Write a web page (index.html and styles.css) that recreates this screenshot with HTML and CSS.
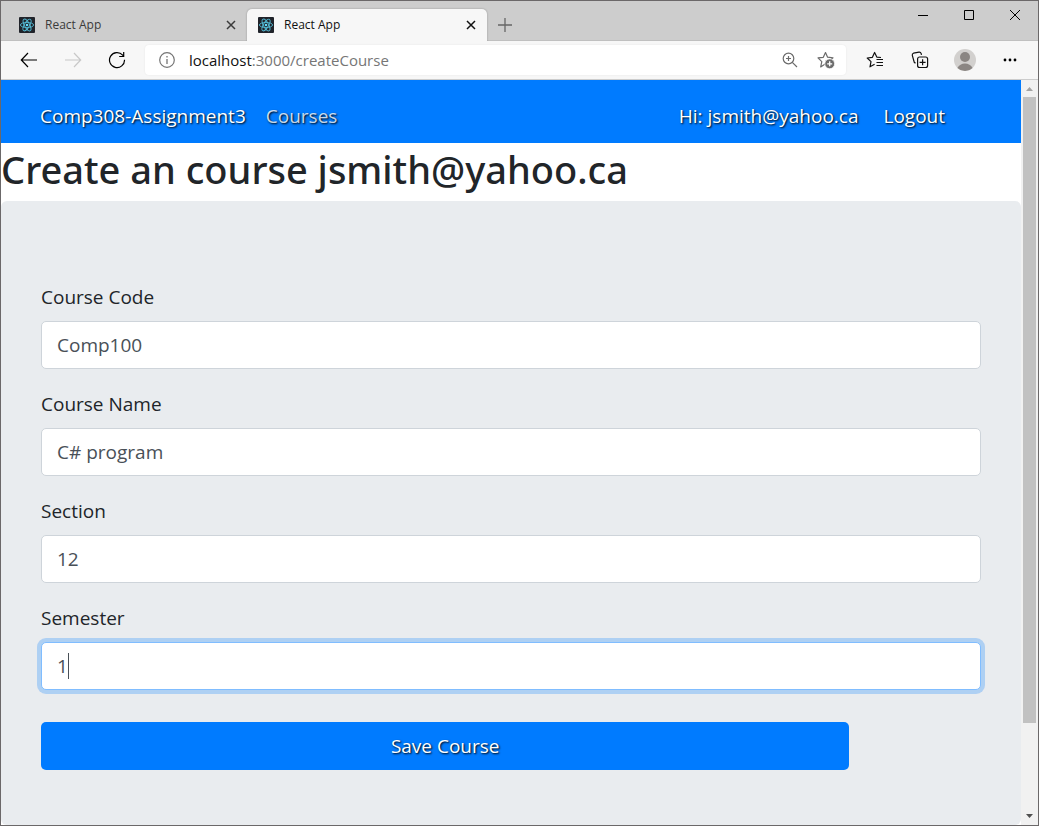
FILE: index.html
```html
<!DOCTYPE html>
<html lang="en">
<head>
<meta charset="utf-8">
<meta name="viewport" content="width=device-width, initial-scale=1">
<title>React App</title>
<link rel="stylesheet" href="styles.css">
</head>
<body>
<svg class="defs" aria-hidden="true">
  <symbol id="react" viewBox="0 0 16 16">
    <rect width="16" height="16" rx="1" fill="#20232a"/>
    <g fill="none" stroke="#53b9d3" stroke-width=".9">
      <ellipse cx="8" cy="8" rx="6.6" ry="2.6"/>
      <ellipse cx="8" cy="8" rx="6.6" ry="2.6" transform="rotate(60 8 8)"/>
      <ellipse cx="8" cy="8" rx="6.6" ry="2.6" transform="rotate(120 8 8)"/>
    </g>
    <circle cx="8" cy="8" r="1.3" fill="#61dafb"/>
  </symbol>
  <symbol id="cross" viewBox="0 0 10 10"><path d="M1 1l8 8M9 1l-8 8" fill="none" stroke="currentColor" stroke-width="1.5"/></symbol>
</svg>
<div class="window">
  <header class="tabstrip">
    <div class="tab">
      <svg class="favicon"><use href="#react"/></svg>
      <span class="tab-title">React App</span>
      <button class="plain tab-close" aria-label="Close tab"><svg><use href="#cross"/></svg></button>
    </div>
    <div class="tab tab-active">
      <svg class="favicon"><use href="#react"/></svg>
      <span class="tab-title">React App</span>
      <button class="plain tab-close" aria-label="Close tab"><svg><use href="#cross"/></svg></button>
    </div>
    <button class="plain new-tab" aria-label="New tab"><svg width="14" height="14" viewBox="0 0 14 14"><path d="M7 0v14M0 7h14" fill="none" stroke="#666" stroke-width="1.3"/></svg></button>
    <div class="window-controls">
      <button class="plain" aria-label="Minimize"><svg width="12" height="12" viewBox="0 0 12 12"><path d="M1 6.5h10" stroke="#000" fill="none"/></svg></button>
      <button class="plain" aria-label="Maximize"><svg width="12" height="12" viewBox="0 0 12 12"><path d="M1.5 1.5h9v9h-9z" stroke="#000" fill="none"/></svg></button>
      <button class="plain" aria-label="Close"><svg width="12" height="12" viewBox="0 0 12 12"><path d="M1 1l10 10M11 1L1 11" stroke="#000" fill="none"/></svg></button>
    </div>
  </header>
  <div class="toolbar">
    <div class="nav-buttons">
      <button class="plain" aria-label="Back"><svg width="18" height="16" viewBox="0 0 18 16" fill="none" stroke="#000" stroke-width="1.2"><path d="M17 8H1.5M8 1L1.3 8 8 15"/></svg></button>
      <button class="plain" aria-label="Forward" disabled><svg width="18" height="16" viewBox="0 0 18 16" fill="none" stroke="#c8c8c8" stroke-width="1.2"><path d="M1 8h15.500M10 1l6.700 7L10 15"/></svg></button>
      <button class="plain" aria-label="Reload"><svg width="18" height="18" viewBox="0 0 18 18" fill="none" stroke="#000" stroke-width="1.200"><path d="M16.500 8.700A7.500 7.500 0 1 1 14.700 4.200L15.500 5.200M15.700 1v4.500h-4.500"/></svg></button>
    </div>
    <div class="address">
      <svg width="16" height="16" viewBox="0 0 16 16"><circle cx="8" cy="8" r="7.3" fill="none" stroke="#757575" stroke-width="1.2"/><path d="M8 7v5M8 4v1.500" stroke="#757575" stroke-width="1.300" fill="none"/></svg>
      <span class="url"><span class="host">localhost</span>:3000/createCourse</span>
      <button class="plain" aria-label="Zoom"><svg width="16" height="16" viewBox="0 0 16 16" fill="none" stroke="#6b6b6b" stroke-width="1.200"><circle cx="6.500" cy="6.500" r="5.300"/><path d="M10.300 10.300L15 15M6.500 4v5M4 6.500h5"/></svg></button>
      <button class="plain" aria-label="Add to favorites"><svg width="19" height="18" viewBox="0 0 19 18"><path d="M8.500 1.500l2.100 4.700 5.400.6-4 3.600 1 5-4.500-2.600L3.700 15.900l1.100-5.200L1 6.900l5.300-.6z" fill="none" stroke="#6b6b6b" stroke-width="1.200" stroke-linejoin="round"/><circle cx="12.700" cy="12.800" r="4.900" fill="#6b6b6b" stroke="#fff" stroke-width=".7"/><path d="M12.700 10.300v5M10.200 12.800h5" stroke="#fff" stroke-width="1.300"/></svg></button>
    </div>
    <div class="tools">
      <button class="plain" aria-label="Favorites"><svg width="18" height="18" viewBox="0 0 18 18" fill="none" stroke="#111" stroke-width="1.200" stroke-linejoin="round"><path d="M15 6.500l-4.200-.4L8.600 1.500 6.400 6.300 1.200 7l3.800 3.600-1 5.200L8.600 13.300M10.500 8.500H17M10.500 11.500H17M10.500 14.500H17"/></svg></button>
      <button class="plain" aria-label="Collections"><svg width="18" height="18" viewBox="0 0 18 18" fill="none" stroke="#111" stroke-width="1.200"><path d="M4.500 12.300L3.300 11.300 1.300 4.300Q1 2.700 2.500 2.200L8 1.100q1.600-.2 2.100 1.300l.4 1.500"/><rect x="6.600" y="6" width="10" height="10.500" rx="2"/><path d="M11.600 8.300v6M8.600 11.300h6"/></svg></button>
      <button class="plain" aria-label="Profile"><svg width="22" height="22" viewBox="0 0 22 22"><circle cx="11" cy="11" r="11" fill="#d2d0ce"/><circle cx="11" cy="8" r="5" fill="#8b8683"/><path d="M3.400 19q2.500-4.500 7.600-4.500t7.600 4.500Q15.500 22 11 22T3.400 19z" fill="#8b8683"/></svg></button>
      <button class="plain" aria-label="Settings and more"><svg width="16" height="4" viewBox="0 0 16 4"><circle cx="3" cy="2" r="1.400"/><circle cx="8" cy="2" r="1.400"/><circle cx="13" cy="2" r="1.400"/></svg></button>
    </div>
  </div>
  <div class="viewport">
    <div class="page">
      <nav class="navbar">
        <a class="brand" href="#">Comp308-Assignment3</a>
        <a class="nav-link" href="#">Courses</a>
        <span class="greeting">Hi: jsmith@yahoo.ca</span>
        <a class="logout" href="#">Logout</a>
      </nav>
      <h1 class="title">Create an course jsmith@yahoo.ca</h1>
      <main class="jumbotron">
        <form>
          <div class="group"><label for="code">Course Code</label><input id="code" type="text" value="Comp100"></div>
          <div class="group"><label for="name">Course Name</label><input id="name" type="text" value="C# program"></div>
          <div class="group"><label for="section">Section</label><input id="section" type="text" value="12"></div>
          <div class="group current"><label for="semester">Semester</label><input id="semester" type="text" value="1"><span class="caret"></span></div>
          <button class="save" type="submit">Save Course</button>
        </form>
      </main>
    </div>
    <div class="scrollbar" aria-hidden="true">
      <svg class="arrow" viewBox="0 0 17 17"><path d="M5 11l3.500-4L12 11z" fill="#a3a3a3"/></svg>
      <div class="track"><div class="thumb"></div></div>
      <svg class="arrow" viewBox="0 0 17 17"><path d="M5 6l3.500 4L12 6z" fill="#505050"/></svg>
    </div>
  </div>
</div>
</body>
</html>
```
FILE: styles.css
```css
* { box-sizing: border-box; }
body { margin: 0; font-family: "Open Sans", "Noto Sans", sans-serif; color: #212529; }
a { text-decoration: none; }
svg { display: block; }
.defs { position: absolute; width: 0; height: 0; }
.plain { display: grid; place-items: center; padding: 0; border: 0; background: none; color: inherit; }
.window { display: flex; flex-direction: column; min-height: 100vh; border: 1px solid #6b6869; }

.tabstrip { display: flex; align-items: flex-end; height: 40px; background: #cdcdcd; border-bottom: 1px solid #c0c0c0; }
.tab { display: flex; align-items: center; flex: 0 1 240px; height: 32px; margin-bottom: -1px; padding: 0 10px 0 11px; color: #3b3b3b; }
.tab:first-child { margin-left: 6px; padding-left: 12px; }
.tab-active { background: #f7f7f7; border-radius: 5px 5px 0 0; color: #111; box-shadow: 0 0 2px rgba(0, 0, 0, .3); clip-path: inset(-3px -3px 0); }
.favicon { width: 16px; height: 16px; }
.tab-title { flex: 1; margin-left: 10px; font-size: 12px; line-height: 16px; }
.tab-close { width: 12px; height: 12px; }
.tab-close svg { width: 10px; height: 10px; }
.new-tab { width: 36px; height: 32px; margin-bottom: -1px; }
.window-controls { display: flex; align-self: flex-start; margin-left: auto; }
.window-controls .plain { width: 46px; height: 28px; }

.toolbar { display: flex; align-items: center; height: 39px; padding-right: 6px; background: #f7f7f7; border-bottom: 1px solid #ccc; }
.nav-buttons { display: flex; padding: 0 6px 0 6px; }
.nav-buttons .plain { width: 44px; height: 32px; }
.address { display: flex; align-items: center; flex: 1; height: 30px; padding: 0 10px 0 14px; background: #fff; border-radius: 4px; box-shadow: 0 0 2px rgba(0, 0, 0, .08); }
.url { flex: 1; margin-left: 14px; font-size: 15px; line-height: 20px; color: #767676; }
.host { color: #111; }
.address .plain { margin-left: 19px; }
.tools { display: flex; padding-left: 6px; }
.tools .plain { width: 45px; height: 32px; }

.viewport { display: flex; flex: 1; }
.page { display: flex; flex-direction: column; flex: 1; min-width: 0; font-size: 19px; line-height: 30px; }
.navbar { display: flex; align-items: center; height: 63px; padding: 8px 76px 0 39px; background: #007bff; color: #fff; text-shadow: 1px 1px 2px #000; }
.navbar a { color: #fff; }
.navbar .brand { margin-right: 20px; }
.navbar .nav-link { color: rgba(255, 255, 255, .8); }
.greeting { margin-left: auto; }
.logout { margin-left: 25px; }
.title { margin: 0 0 8px; padding-top: 2px; font-family: "Noto Sans", "Open Sans", sans-serif; font-size: 38px; line-height: 48px; font-weight: 500; }
.jumbotron { flex: 1; padding: 81px 40px 54px; background: #e9ecef; border-radius: 6px; }
.group { position: relative; margin-bottom: 20px; }
.group label { display: block; margin-bottom: 9px; }
.group input { display: block; width: 100%; height: 48px; padding: 0 15px; border: 1px solid #ced4da; border-radius: 5px; background: #fff; color: #495057; font: inherit; }
.current { margin-bottom: 32px; }
.group input:focus, .current input { border-color: #80bdff; outline: 0; box-shadow: 0 0 0 4px rgba(0, 123, 255, .25); }
.caret { position: absolute; left: 27px; bottom: 11px; width: 1px; height: 26px; background: #495057; }
.save { width: 86%; height: 48px; border: 0; border-radius: 5px; background: #007bff; color: #fff; font: inherit; text-shadow: 1px 1px 2px #000; }

.scrollbar { display: flex; flex-direction: column; width: 17px; background: #f1f1f1; }
.arrow { width: 17px; height: 17px; }
.track { flex: 1; padding: 0 2px; display: grid; grid-template-rows: 88% 12%; }
.thumb { background: #c1c1c1; }
```
